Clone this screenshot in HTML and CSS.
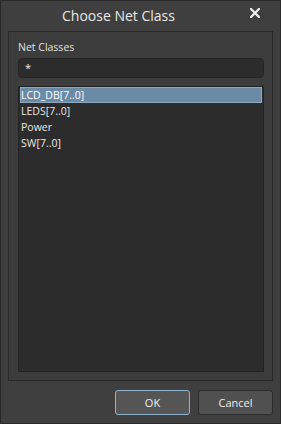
FILE: index.html
```html
<!DOCTYPE html>
<html lang="en">
<head>
  <meta charset="UTF-8" />
  <title>Choose Net Class</title>
  <link rel="stylesheet" href="styles.css">
</head>
<body>
  <div class="dialog">
    <!-- Title bar -->
    <div class="title-bar">
      <span class="title">Choose Net Class</span>
      <span class="close-btn">
        <svg width="10" height="10" viewBox="0 0 10 10">
          <path d="M1 1 L9 9 M9 1 L1 9" stroke="#f0f0f0" stroke-width="2.2" stroke-linecap="square"/>
        </svg>
      </span>
    </div>

    <!-- Group -->
    <div class="group">
      <div class="label">Net Classes</div>
      <div class="filter">*</div>
      <div class="list">
        <div class="item selected">LCD_DB[7..0]</div>
        <div class="item">LEDS[7..0]</div>
        <div class="item">Power</div>
        <div class="item">SW[7..0]</div>
      </div>
    </div>

    <!-- Buttons -->
    <div class="buttons">
      <button class="btn default">OK</button>
      <button class="btn">Cancel</button>
    </div>
  </div>
</body>
</html>
```

FILE: styles.css
```css
html, body {
  margin: 0; padding: 0;
  background: #3f3f3f;
  font-family: 'Open Sans', 'Noto Sans', sans-serif;
  color: #e6e6e6;
}
.dialog {
  width: 281px;
  height: 424px;
  box-sizing: border-box;
  border: 1px solid #2a2a2a;
  background: #3f3f3f;
  display: flex;
  flex-direction: column;
}
.title-bar {
  height: 30px;
  position: relative;
  display: flex;
  justify-content: center;
  align-items: center;
  padding-right: 44px;
}
.title {
  font-size: 14px;
  color: #e8e8e8;
  margin-top: -1px;
}
.close-btn {
  position: absolute;
  top: 7px; right: 20px;
  line-height: 0;
}
.group {
  margin: 0 7px 0 7px;
  height: 350px;
  box-sizing: border-box;
  border: 1px solid #2a2a2a;
  background: #3c3c3c;
  padding: 8px 8px 8px 9px;
  display: flex;
  flex-direction: column;
}
.label {
  font-size: 10.5px;
  line-height: 14px;
  color: #e0e0e0;
}
.filter {
  margin-top: 4px;
  height: 20px;
  box-sizing: border-box;
  background: #2c2c2c;
  border: 1px solid #262626;
  border-radius: 4px;
  font-size: 11px;
  line-height: 18px;
  padding-left: 6px;
  color: #f0f0f0;
}
.list {
  margin-top: 8px;
  flex: 1;
  background: #2c2c2c;
  border: 1px solid #232323;
  padding: 0 1px;
}
.item {
  font-size: 10.5px;
  line-height: 16px;
  height: 16px;
  padding-left: 1px;
  color: #e8e8e8;
}
.item.selected {
  background: #6b8aa6;
  box-shadow: inset 0 0 0 1px #8fa9c0;
  color: #ffffff;
}
.buttons {
  flex: 1;
  display: flex;
  justify-content: flex-end;
  align-items: center;
  gap: 8px;
  padding-right: 7px;
  padding-top: 1px;
}
.btn {
  width: 75px;
  height: 25px;
  box-sizing: border-box;
  background: #505050;
  border: 1px solid #2c2c2c;
  border-radius: 3px;
  color: #eeeeee;
  font-family: 'Open Sans', 'Noto Sans', sans-serif;
  font-size: 11px;
  padding: 0;
}
.btn.default {
  border-color: #8fb4cf;
  background: #565656;
}
```
